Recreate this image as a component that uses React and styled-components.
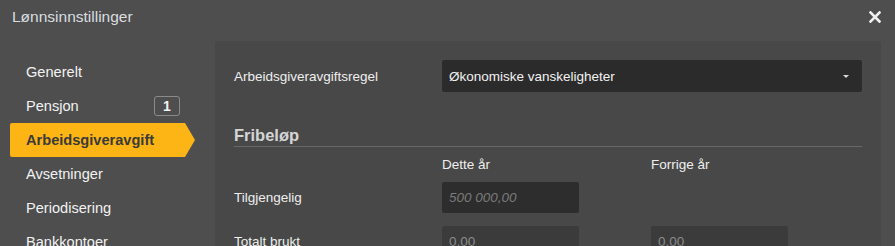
import React from "react";
import styled, { createGlobalStyle } from "styled-components";

const GlobalStyle = createGlobalStyle`
	body {
		margin: 0;
		background: #4e4e4e;
		font-family: "Liberation Sans", Arial, sans-serif;
	}
`;

const menu = [
	{ label: "Generelt" },
	{ label: "Pensjon", badge: 1 },
	{ label: "Arbeidsgiveravgift", active: true },
	{ label: "Avsetninger" },
	{ label: "Periodisering" },
	{ label: "Bankkontoer" },
];

const App = () => {
	return (
		<Dialog>
			<GlobalStyle />
			<Header>
				<Title>Lønnsinnstillinger</Title>
				<Close>
					<svg width="12" height="12" viewBox="0 0 12 12">
						<path
							d="M1.5 1.5 L10.5 10.5 M10.5 1.5 L1.5 10.5"
							stroke="#efefef"
							strokeWidth="2.6"
							strokeLinecap="square"
						/>
					</svg>
				</Close>
			</Header>
			<Body>
				<Sidebar>
					{menu.map((m) => (
						<MenuItem key={m.label} $active={m.active}>
							{m.label}
							{m.badge && <Badge>{m.badge}</Badge>}
						</MenuItem>
					))}
				</Sidebar>
				<Panel>
					<Row $height={32}>
						<Label>Arbeidsgiveravgiftsregel</Label>
						<Select>
							Økonomiske vanskeligheter
							<Caret />
						</Select>
					</Row>
					<Heading>Fribeløp</Heading>
					<Row $height={35}>
						<Label />
						<Cell>Dette år</Cell>
						<Cell>Forrige år</Cell>
					</Row>
					<Row $height={31} $gap={13}>
						<Label>Tilgjengelig</Label>
						<Cell>
							<Input placeholder="500 000,00" />
						</Cell>
						<Cell />
					</Row>
					<Row $height={31}>
						<Label>Totalt brukt</Label>
						<Cell>
							<Input $disabled value="0,00" readOnly />
						</Cell>
						<Cell>
							<Input $disabled value="0,00" readOnly />
						</Cell>
					</Row>
				</Panel>
			</Body>
		</Dialog>
	);
};

export default App;

const Dialog = styled.div`
	width: 895px;
	height: 246px;
	overflow: hidden;
	background: #4e4e4e;
	display: flex;
	flex-direction: column;
	font-family: "Liberation Sans", Arial, sans-serif;
`;

const Header = styled.div`
	flex-shrink: 0;
	height: 41px;
	display: flex;
	align-items: center;
	justify-content: space-between;
	padding: 0 14px 7px 12px;
	box-sizing: border-box;
`;

const Title = styled.div`
	color: #d9dde0;
	font-size: 15.5px;
`;

const Close = styled.div`
	width: 12px;
	height: 12px;
	display: flex;
`;

const Body = styled.div`
	display: flex;
	flex: 1;
	min-height: 0;
	overflow: hidden;
`;

const Sidebar = styled.div`
	flex-shrink: 0;
	width: 205px;
	padding: 14px 0 0 10px;
	display: flex;
	flex-direction: column;
`;

const MenuItem = styled.div`
	flex-shrink: 0;
	position: relative;
	height: 34px;
	width: 175px;
	display: flex;
	align-items: center;
	justify-content: space-between;
	padding: 0 5px 0 16px;
	box-sizing: border-box;
	font-size: 14.6px;
	color: ${(p) => (p.$active ? "#3a3a3a" : "#f2f2f2")};
	font-weight: ${(p) => (p.$active ? "bold" : "normal")};
	background: ${(p) => (p.$active ? "#fcb514" : "transparent")};
	border-radius: 2px 0 0 2px;

	&::after {
		content: "";
		display: ${(p) => (p.$active ? "block" : "none")};
		position: absolute;
		right: -10px;
		top: 0;
		border-left: 10px solid #fcb514;
		border-top: 17px solid transparent;
		border-bottom: 17px solid transparent;
	}
`;

const Badge = styled.span`
	width: 26px;
	height: 20px;
	box-sizing: border-box;
	border: 1px solid #8a8a8a;
	border-radius: 3px;
	display: flex;
	align-items: center;
	justify-content: center;
	font-weight: bold;
	font-size: 14px;
	color: #f2f2f2;
`;

const Panel = styled.div`
	flex-shrink: 0;
	width: 666px;
	background: #484848;
	border-radius: 3px 3px 0 0;
	padding: 19px 19px 0 19px;
	box-sizing: border-box;
	display: flex;
	flex-direction: column;
`;

const Row = styled.div`
	flex-shrink: 0;
	display: flex;
	align-items: center;
	height: ${(p) => p.$height}px;
	margin-bottom: ${(p) => p.$gap || 0}px;
`;

const Label = styled.div`
	flex-shrink: 0;
	width: 208px;
	font-size: 13.5px;
	color: #eeeeee;
`;

const Cell = styled.div`
	flex-shrink: 0;
	width: 209px;
	font-size: 13.5px;
	color: #eeeeee;
	display: flex;
`;

const Select = styled.div`
	flex: 1;
	height: 32px;
	background: #2b2b2b;
	border-radius: 2px;
	display: flex;
	align-items: center;
	justify-content: space-between;
	padding: 0 13px 0 7px;
	font-size: 13.5px;
	color: #f2f2f2;
`;

const Caret = styled.span`
	width: 0;
	height: 0;
	margin-top: 1px;
	border-left: 3.5px solid transparent;
	border-right: 3.5px solid transparent;
	border-top: 3.5px solid #d8d8d8;
`;

const Heading = styled.div`
	flex-shrink: 0;
	margin-top: 34px;
	padding-bottom: 1px;
	line-height: 19px;
	border-bottom: 1px solid #686868;
	font-size: 16.5px;
	font-weight: bold;
	color: #d5d5d5;
`;

const Input = styled.input`
	width: 137px;
	height: 31px;
	box-sizing: border-box;
	border: none;
	outline: none;
	border-radius: 2px;
	padding: 0 7px;
	font-family: "Liberation Sans", Arial, sans-serif;
	font-size: 13.5px;
	background: ${(p) => (p.$disabled ? "#3b3b3b" : "#2d2d2d")};
	color: #8a8a8a;

	&::placeholder {
		color: #7b7b7b;
		font-style: italic;
	}
`;
